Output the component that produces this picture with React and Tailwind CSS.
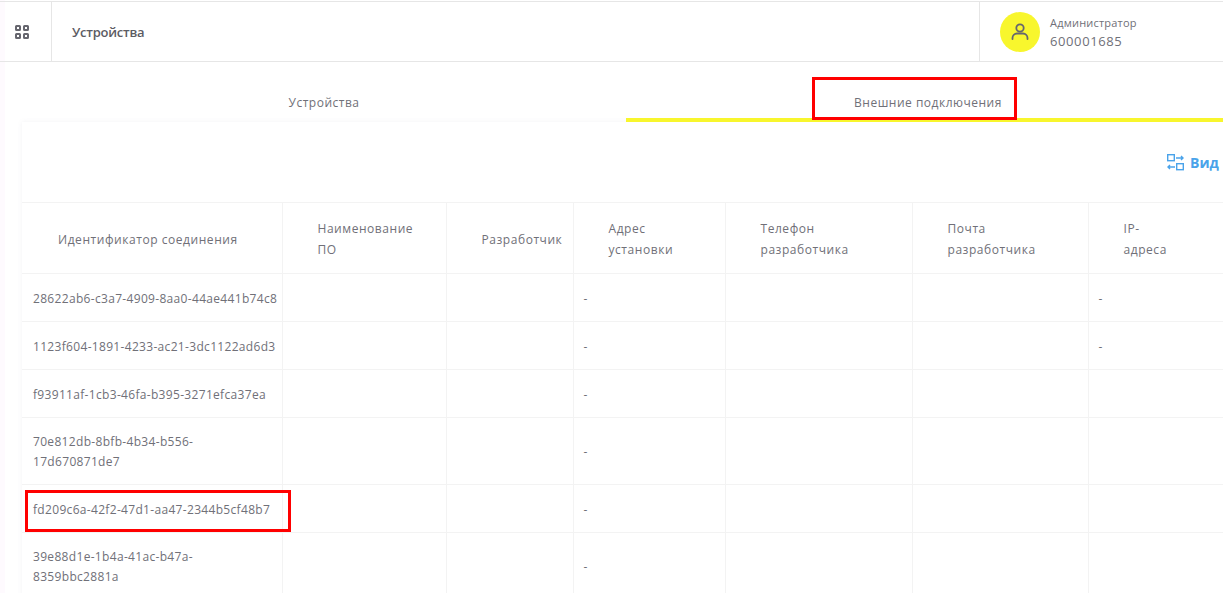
import React from "react";

const columns = [
  { title: "Идентификатор соединения", width: "w-[260px]", head: "pl-[36px] pr-2" },
  { title: "Наименование ПО", width: "w-[164px]", head: "pl-[35px] pr-8" },
  { title: "Разработчик", width: "w-[127px]", head: "pl-[35px]" },
  { title: "Адрес установки", width: "w-[152px]", head: "pl-[35px] pr-8" },
  { title: "Телефон разработчика", width: "w-[187px]", head: "pl-[35px] pr-8" },
  { title: "Почта разработчика", width: "w-[176px]", head: "pl-[35px] pr-8" },
  { title: "IP-адреса", width: "w-[135px]", head: "pl-[35px] pr-[50px]" },
];

const rows = [
  { id: "28622ab6-c3a7-4909-8aa0-44ae441b74c8", ip: "-", h: "h-[48px]" },
  { id: "1123f604-1891-4233-ac21-3dc1122ad6d3", ip: "-", h: "h-[48px]" },
  { id: "f93911af-1cb3-46fa-b395-3271efca37ea", ip: "", h: "h-[48px]" },
  { id: "70e812db-8bfb-4b34-b556-17d670871de7", ip: "", h: "h-[67px]", narrow: true },
  { id: "fd209c6a-42f2-47d1-aa47-2344b5cf48b7", ip: "", h: "h-[48px]" },
  { id: "39e88d1e-1b4a-41ac-b47a-8359bbc2881a", ip: "", h: "h-[67px]", narrow: true },
];

const cell = "border-r border-b border-[#f3f3f3] pl-[10px] pr-[10px] pt-[2px] text-[12px] leading-[20px] tracking-[0.32px] text-[#707078]";

const App = () => {
  return (
    <div className="relative h-[593px] w-[1223px] overflow-hidden bg-white shadow-[inset_5px_0_0_#fefafe] font-['Open_Sans',sans-serif]">
      {/* Header */}
      <div className="mt-px flex h-[61px] border-t border-b border-[#e6e6e6]">
        <div className="flex w-[52px] shrink-0 items-center justify-center border-r border-[#e6e6e6] pr-[7px] pt-px">
          <svg width="14" height="14" viewBox="0 0 14 14" fill="none" stroke="#66666e" strokeWidth="2">
            <rect x="1" y="1" width="4" height="4" rx="0.5" />
            <rect x="9" y="1" width="4" height="4" rx="0.5" />
            <rect x="1" y="9" width="4" height="4" rx="0.5" />
            <rect x="9" y="9" width="4" height="4" rx="0.5" />
          </svg>
        </div>
        <div className="flex flex-1 items-center pl-5 pt-[2px] text-[13px] font-semibold tracking-[-0.25px] text-[#5c5c63]">Устройства</div>
        <div className="flex w-[244px] shrink-0 items-center border-l border-[#e6e6e6] pl-5">
          <div className="flex h-10 w-10 items-center justify-center rounded-full bg-[#f8f62d]">
            <svg width="18" height="18" viewBox="0 0 18 18" fill="none" stroke="#66666e" strokeWidth="1.8" strokeLinecap="round">
              <circle cx="9" cy="5" r="3.7" />
              <path d="M1.5 16v-1c0-2.5 2-4.5 4.5-4.5h6c2.5 0 4.5 2 4.5 4.5v1" />
            </svg>
          </div>
          <div className="ml-[10px] text-[#707078]">
            <div className="text-[11px] leading-[19px] tracking-[0.2px]">Администратор</div>
            <div className="text-[13px] leading-[18px] tracking-[0.6px]">600001685</div>
          </div>
        </div>
      </div>

      {/* Tabs */}
      <div className="ml-[22px] flex h-[60px] text-[12px] tracking-[0.5px] text-[#707078]">
        <div className="flex w-[604px] items-end justify-center pb-[9px] leading-[20px]">Устройства</div>
        <div className="flex flex-1 items-end justify-center border-b-4 border-[#f8f62d] pb-[5px] pl-[7px] leading-[20px]">
          Внешние подключения
        </div>
      </div>

      {/* Card */}
      <div className="ml-[22px] w-[1240px] bg-white shadow-[0_0_5px_rgba(120,120,140,0.09)]">
        <div className="flex h-[80px] items-center pl-[1145px]">
          <svg width="17" height="17" viewBox="0 0 17 17" fill="none" stroke="#4aa3ea" strokeWidth="1.4">
            <rect x="0.7" y="0.7" width="6.6" height="6" />
            <rect x="9.7" y="9.7" width="6.6" height="6" />
            <path d="M9 4h7M14 2l2 2-2 2M8 13H1M3 11l-2 2 2 2" />
          </svg>
          <span className="ml-[6px] text-[14px] font-bold text-[#4aa3ea]">Вид</span>
        </div>
        <table className="w-[1201px] table-fixed border-collapse border-t border-[#f3f3f3] text-left">
          <thead>
            <tr className="h-[71px]">
              {columns.map((col) => (
                <th
                  key={col.title}
                  className={`${col.width} ${col.head} border-r border-b border-[#f3f3f3] pt-[2px] text-[12px] leading-[21px] font-normal tracking-[0.55px] text-[#707078]`}
                >
                  {col.title}
                </th>
              ))}
            </tr>
          </thead>
          <tbody>
            {rows.map((row) => (
              <tr key={row.id} className={row.h}>
                <td className={`${cell} ${row.narrow ? "!pr-[60px]" : "!pr-[2px]"} !pl-[11px] break-words`}>{row.id}</td>
                <td className={cell}></td>
                <td className={cell}></td>
                <td className={cell}>-</td>
                <td className={cell}></td>
                <td className={cell}></td>
                <td className={cell}>{row.ip}</td>
              </tr>
            ))}
          </tbody>
        </table>
      </div>

      {/* Red annotation frames */}
      <div className="absolute left-[812px] top-[77px] h-[43px] w-[205px] border-[3px] border-[#ff0000]"></div>
      <div className="absolute left-[25px] top-[490px] h-[42px] w-[266px] border-[3px] border-[#ff0000]"></div>
    </div>
  );
};

export default App;
